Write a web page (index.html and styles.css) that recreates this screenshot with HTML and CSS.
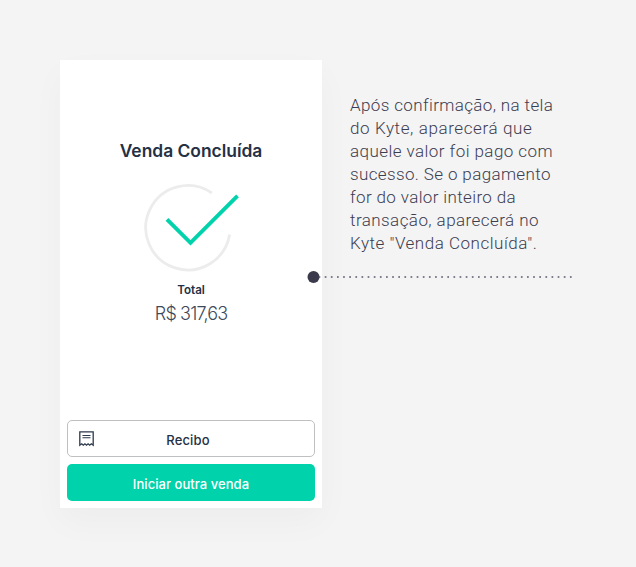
FILE: index.html
```html
<!DOCTYPE html>
<html lang="pt-BR">
<head>
<meta charset="utf-8">
<title>Venda Concluída</title>
<link rel="stylesheet" href="styles.css">
</head>
<body>
<main class="page">
  <section class="phone">
    <h1 class="title">Venda Concluída</h1>
    <svg class="check" width="100" height="92" viewBox="0 0 100 92" fill="none">
      <path d="M70.9 12A42.2 42.2 0 1 0 88.6 53.6" stroke="#ececec" stroke-width="2.8"/>
      <path d="M26 38.3L49.5 61.8L96.5 14.8" stroke="#00d2ab" stroke-width="3.9"/>
    </svg>
    <div class="label">Total</div>
    <div class="amount">R$ 317,63</div>
    <div class="actions">
      <button class="button receipt">
        <svg class="icon" width="15" height="16" viewBox="0 0 15 16" fill="none" stroke="#2d394c">
          <path d="M.8 .8H14.2V14.2L12.3 12.8L10.7 14.2L9.1 12.8L7.5 14.2L5.9 12.8L4.3 14.2L2.7 12.8L.8 14.2Z" stroke-width="1.3"/>
          <path d="M3.5 4.5H11.5M3.5 6.8H11.5" stroke-width="1.1"/>
        </svg>
        <span>Recibo</span>
      </button>
      <button class="button primary"><span>Iniciar outra venda</span></button>
    </div>
  </section>
  <aside class="note">
    <p class="copy">
      <span class="l1">Após confirmação, na tela</span>
      <span class="l2">do Kyte, aparecerá que</span>
      <span class="l3">aquele valor foi pago com</span>
      <span class="l4">sucesso. Se o pagamento</span>
      <span class="l5">for do valor inteiro da</span>
      <span class="l6">transação, aparecerá no</span>
      <span class="l7">Kyte "Venda Concluída".</span>
    </p>
  </aside>
  <svg class="pointer" width="266" height="14" viewBox="0 0 266 14">
    <circle cx="6.5" cy="7" r="6" fill="#3a3a4c"/>
    <path d="M11.6 7H266" stroke="#57576a" stroke-width="1.7" stroke-dasharray="1.7 4.43"/>
  </svg>
</main>
</body>
</html>
```
FILE: styles.css
```css
* { box-sizing: border-box; }
body { margin: 0; background: #f4f4f4; }
.page {
  position: relative;
  display: flex;
  gap: 28px;
  width: 636px;
  height: 567px;
  padding: 60px 0 59px 60px;
  overflow: hidden;
}
.phone {
  display: flex;
  flex-direction: column;
  align-items: center;
  width: 262px;
  height: 448px;
  padding: 79px 7px 7px;
  background: #fff;
  box-shadow: 0 14px 32px rgba(0, 0, 0, .03);
  font-family: Inter, "Liberation Sans", sans-serif;
  color: #253044;
}
.title {
  margin: 0;
  font-size: 17.4px;
  line-height: 24px;
  font-weight: 600;
  white-space: nowrap;
}
.check { margin: 18px 1px 0 0; }
.label { margin-top: 9px; font-size: 11.6px; line-height: 16px; font-weight: 600; }
.amount {
  margin-top: 4px;
  font-size: 18px;
  line-height: 24px;
  font-weight: 300;
  letter-spacing: -.85px;
  color: #3d485a;
}
.actions { display: grid; gap: 7px; width: 248px; margin-top: auto; }
.button {
  display: flex;
  align-items: center;
  justify-content: center;
  height: 37px;
  padding: 2px 0 0;
  border: 0;
  border-radius: 5px;
  font: 500 13px/18px Inter, "Liberation Sans", sans-serif;
}
.receipt {
  padding: 1px 11px 0;
  background: #fff;
  border: 1px solid #bfc0c2;
  color: #253044;
}
.receipt span {
  flex: 1;
  padding: 1px 21px 0 0;
  letter-spacing: .15px;
  text-align: center;
}
.primary { background: #00d2ab; color: #fff; letter-spacing: .05px; }
.note { padding-top: 34px; }
.copy {
  margin: 0;
  font: 300 17px/23px Roboto, "Liberation Sans", sans-serif;
  letter-spacing: .37px;
  color: #3d3d50;
}
.copy span { display: block; white-space: nowrap; }
.copy .l2 { letter-spacing: .6px; }
.copy .l3 { letter-spacing: .44px; }
.copy .l6 { letter-spacing: .43px; }
.copy .l7 { letter-spacing: .52px; }
.pointer { position: absolute; left: 307px; top: 270px; }
```
